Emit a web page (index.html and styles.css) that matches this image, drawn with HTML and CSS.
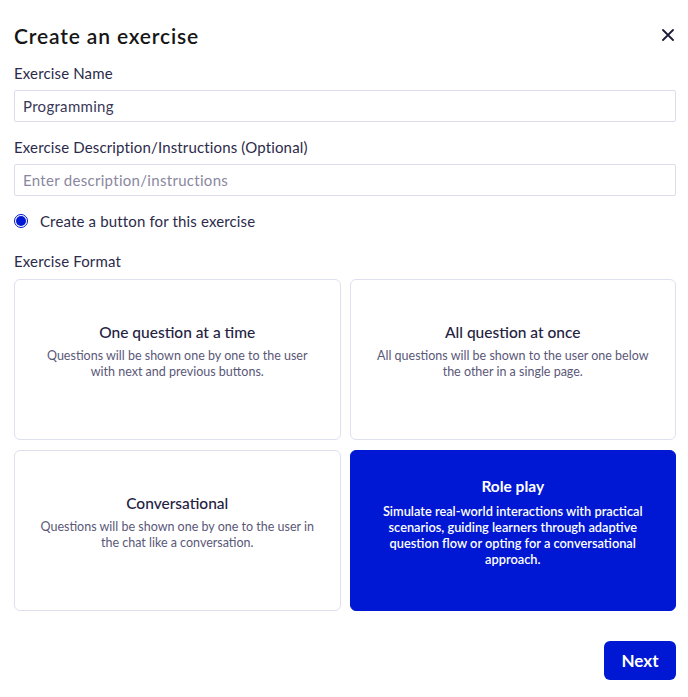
FILE: index.html
```html
<!DOCTYPE html>
<html lang="en">
<head>
    <meta charset="UTF-8">
    <meta name="viewport" content="width=device-width, initial-scale=1.0">
    <title>Create an exercise</title>
    <link rel="stylesheet" href="styles.css">
</head>
<body>
    <div class="modal">
        <div class="modal-header">
            <h1>Create an exercise</h1>
            <button class="close" aria-label="Close">
                <svg width="12" height="12" viewBox="0 0 12 12">
                    <path d="M1 1L11 11M11 1L1 11" stroke="#1d1b3a" stroke-width="1.8" stroke-linecap="round"/>
                </svg>
            </button>
        </div>

        <label class="field-label" for="name">Exercise Name</label>
        <input class="field" id="name" type="text" value="Programming">

        <label class="field-label second" for="desc">Exercise Description/Instructions (Optional)</label>
        <input class="field" id="desc" type="text" placeholder="Enter description/instructions">

        <label class="radio-row">
            <span class="radio"><span class="radio-dot"></span></span>
            Create a button for this exercise
        </label>

        <div class="field-label format">Exercise Format</div>
        <div class="formats">
            <div class="format-card">
                <h3>One question at a time</h3>
                <p>Questions will be shown one by one to the user<br>with next and previous buttons.</p>
            </div>
            <div class="format-card">
                <h3>All question at once</h3>
                <p>All questions will be shown to the user one below<br>the other in a single page.</p>
            </div>
            <div class="format-card">
                <h3>Conversational</h3>
                <p>Questions will be shown one by one to the user in<br>the chat like a conversation.</p>
            </div>
            <div class="format-card selected">
                <h3>Role play</h3>
                <p>Simulate real-world interactions with practical<br>scenarios, guiding learners through adaptive<br>question flow or opting for a conversational<br>approach.</p>
            </div>
        </div>

        <div class="footer">
            <button class="next">Next</button>
        </div>
    </div>
</body>
</html>
```

FILE: styles.css
```css
body {
    margin: 0;
    background-color: #ffffff;
    font-family: Lato, "Open Sans", sans-serif;
    color: #2c2a4a;
}
.modal {
    padding: 21px 12px 0 14px;
    display: flex;
    flex-direction: column;
}
.modal-header {
    display: flex;
    justify-content: space-between;
    align-items: center;
    height: 28px;
}
h1 {
    margin: 0;
    font-size: 21px;
    font-weight: 600;
    letter-spacing: 0.85px;
    color: #161616;
}
.close {
    border: none;
    background: none;
    padding: 0;
    margin-right: 1px;
    width: 14px;
    height: 14px;
    display: flex;
    align-items: center;
    justify-content: center;
    cursor: pointer;
}
.field-label {
    display: block;
    font-size: 15px;
    line-height: 20px;
    letter-spacing: 0.15px;
    margin-top: 14px;
    color: #2c2a4a;
}
.field-label.second {
    margin-top: 15px;
}
.field-label.format {
    margin-top: 20px;
}
.field {
    box-sizing: border-box;
    margin-top: 7px;
    width: 100%;
    height: 32px;
    padding: 0 8px;
    font-family: inherit;
    font-size: 15px;
    letter-spacing: 0.3px;
    color: #3a3857;
    border: 1px solid #dcdcec;
    border-radius: 2px;
    outline: none;
}
.field::placeholder {
    color: #8a889f;
}
.radio-row {
    display: flex;
    align-items: center;
    gap: 12px;
    margin-top: 15px;
    height: 20px;
    font-size: 15px;
    letter-spacing: 0.15px;
    color: #2c2a4a;
}
.radio {
    box-sizing: border-box;
    width: 14px;
    height: 14px;
    border-radius: 50%;
    border: 1px solid #0018d4;
    display: flex;
    align-items: center;
    justify-content: center;
}
.radio-dot {
    width: 10px;
    height: 10px;
    border-radius: 50%;
    background-color: #0018d4;
}
.formats {
    margin-top: 8px;
    display: grid;
    grid-template-columns: 1fr 1fr;
    column-gap: 9px;
    row-gap: 10px;
}
.format-card {
    box-sizing: border-box;
    height: 161px;
    border: 1px solid #dfe0ee;
    border-radius: 6px;
    display: flex;
    flex-direction: column;
    justify-content: center;
    align-items: center;
    text-align: center;
    padding-bottom: 18px;
    cursor: pointer;
}
.format-card h3 {
    margin: 0;
    font-size: 15.5px;
    font-weight: 500;
    line-height: 20px;
    color: #24223f;
}
.format-card p {
    margin: 6px 0 0;
    font-size: 12.5px;
    line-height: 16px;
    color: #5a5878;
}
.format-card.selected {
    background-color: #0018d4;
    border-color: #0018d4;
}
.format-card.selected h3 {
    color: #ffffff;
    font-weight: 700;
}
.format-card.selected p {
    color: #ffffff;
    font-weight: 600;
    font-size: 12.8px;
    margin-top: 7px;
}
.footer {
    display: flex;
    justify-content: flex-end;
    margin-top: 30px;
}
.next {
    width: 72px;
    height: 39px;
    border: none;
    border-radius: 6px;
    background-color: #0018d4;
    color: #ffffff;
    font-family: inherit;
    font-size: 17px;
    font-weight: 700;
    cursor: pointer;
}
```
